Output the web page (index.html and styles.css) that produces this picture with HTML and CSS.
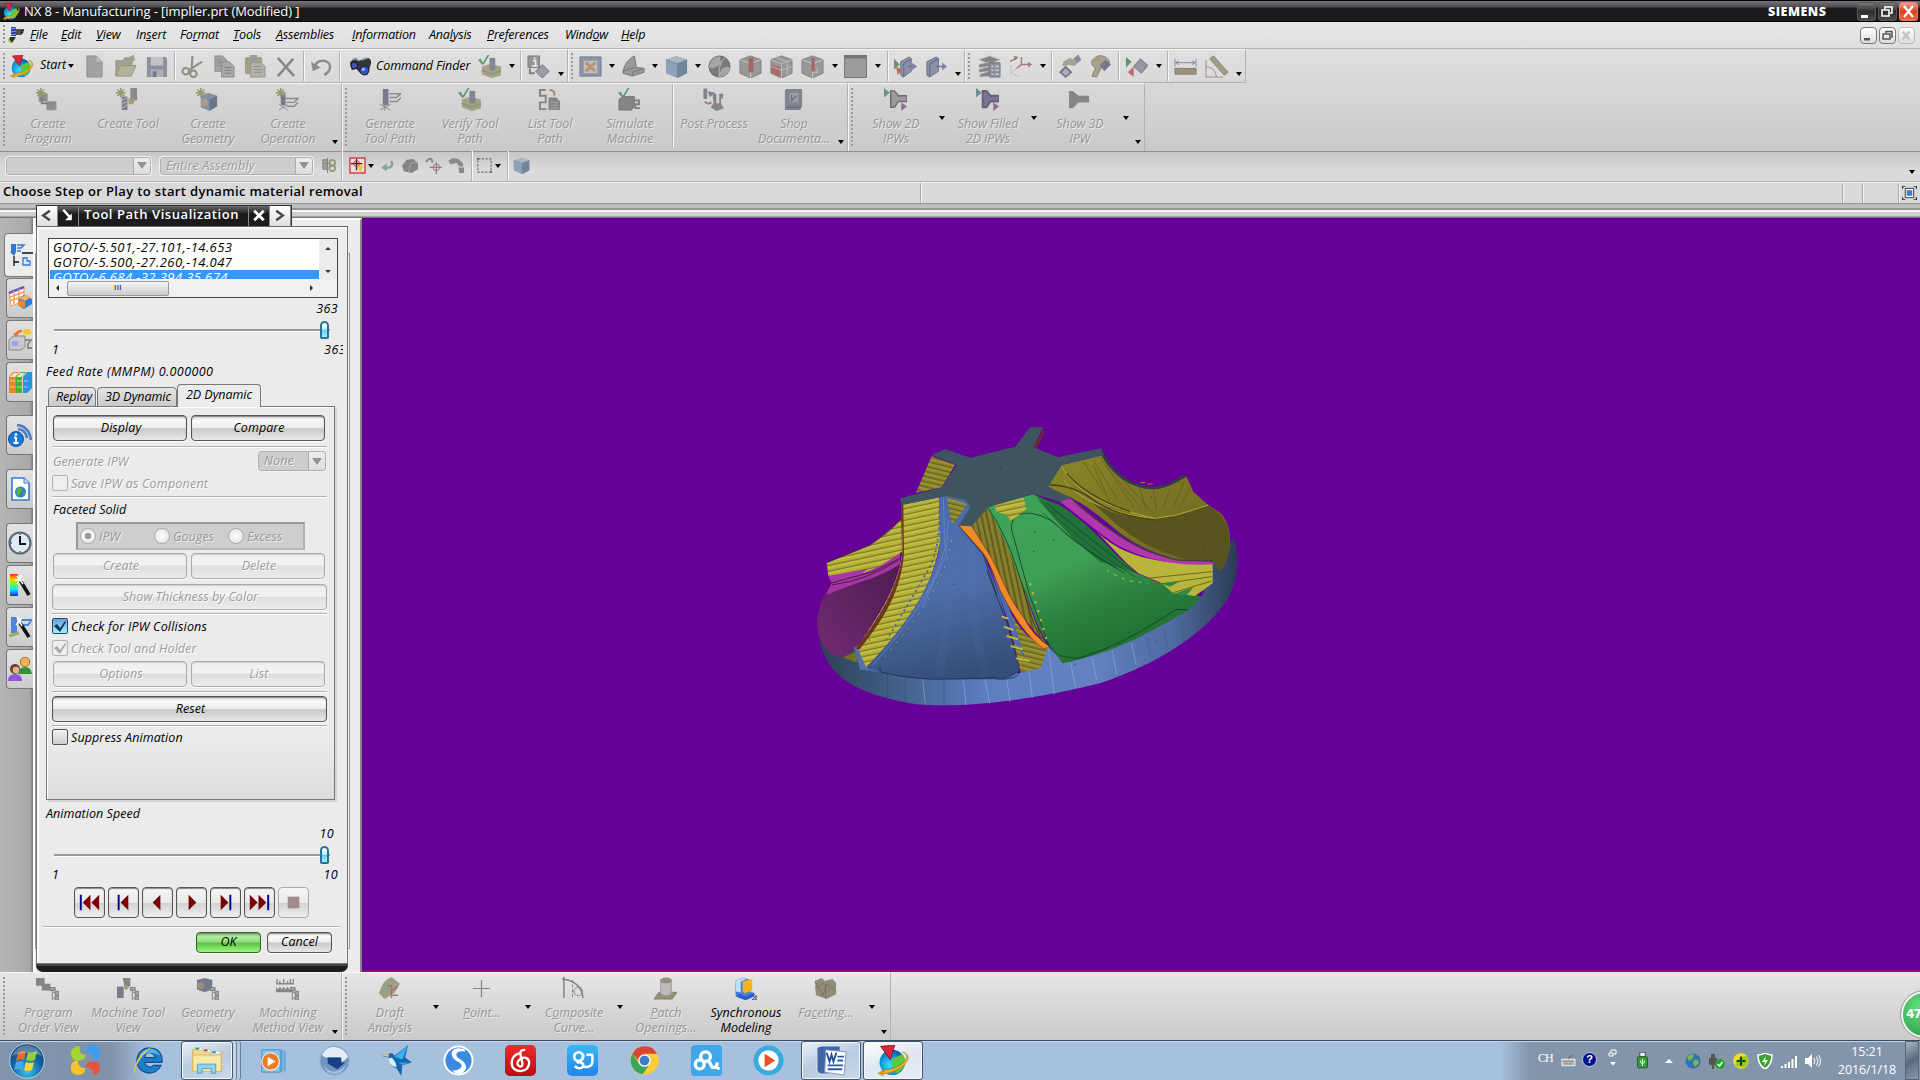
FILE: index.html
```html
<!DOCTYPE html>
<html lang="en">
<head>
<meta charset="utf-8">
<title>NX 8 - Manufacturing</title>
<link rel="stylesheet" href="styles.css">
</head>
<body>
<svg class="defs" width="0" height="0">
<defs>
<linearGradient id="gBlue" x1="0" y1="0" x2="0" y2="1"><stop offset="0" stop-color="#6fc8f5"/><stop offset="1" stop-color="#1273c8"/></linearGradient>
<radialGradient id="gOrb" cx=".5" cy=".8" r=".9"><stop offset="0" stop-color="#39c4ee"/><stop offset=".5" stop-color="#14619f"/><stop offset="1" stop-color="#0f3460"/></radialGradient>
<radialGradient id="gGlobe" cx=".4" cy=".6" r=".7"><stop offset="0" stop-color="#38e0ff"/><stop offset=".6" stop-color="#0c8ad0"/><stop offset="1" stop-color="#0a3f90"/></radialGradient>
<linearGradient id="gSky" x1="0" y1="0" x2="0" y2="1"><stop offset="0" stop-color="#38b8f4"/><stop offset="1" stop-color="#2484ea"/></linearGradient>
<linearGradient id="gRed" x1="0" y1="0" x2="0" y2="1"><stop offset="0" stop-color="#f02a2a"/><stop offset="1" stop-color="#b80f12"/></linearGradient>
<linearGradient id="gSpec" x1="0" y1="0" x2="0" y2="1"><stop offset="0" stop-color="#f22"/><stop offset=".25" stop-color="#fc0"/><stop offset=".45" stop-color="#6f3"/><stop offset=".7" stop-color="#0ef"/><stop offset="1" stop-color="#22f"/></linearGradient>
<symbol id="nx" viewBox="0 0 24 24"><circle cx="11" cy="13.500" r="9.800" fill="url(#gGlobe)"/><path d="M11 11l8-4q3 4 1.500 9-2 4-6 6-4-4-3.500-11" fill="#5cc83a"/><path d="M19 5.500c8 2 4 10-5 14-6 3-10 3-12 2.500l2-2 0 4-4-2 4-2.500q14-1 18-9 1-4-3-5" fill="#f4b020" stroke="#a96a10" stroke-width=".4"/><path d="M2 1l11-1-3.500 11.500z" fill="#d8283c" stroke="#7c0d1c" stroke-width=".6"/></symbol>
<symbol id="doc" viewBox="0 0 24 24"><path d="M4 1h10l6 6v16H4z" fill="#a2a2a2" stroke="#929292"/><path d="M14 1l6 6h-6z" fill="#bebebe"/></symbol>
<symbol id="open" viewBox="0 0 24 24"><path d="M2 22V6h7l2-3h8v7" fill="#a3a193" stroke="#928f80"/><path d="M2 22l5-11h16l-5 11z" fill="#b5b29c" stroke="#97947f"/><path d="M14 4l6-3 1 5" fill="none" stroke="#9ba790" stroke-width="2"/></symbol>
<symbol id="save" viewBox="0 0 24 24"><path d="M2 2h19l2 2v19H2z" fill="#8d90a0"/><path d="M6 2h13v9H6z" fill="#c3c3c6"/><path d="M6 15h13v8H6z" fill="#adadb3"/><path d="M8 17h4v6H8z" fill="#767a8c"/></symbol>
<symbol id="cut" viewBox="0 0 24 24"><g fill="none" stroke="#8f8f86" stroke-width="2.2"><path d="M12 1l-1 14M22 7L8 16"/><circle cx="5" cy="17" r="3.4"/><circle cx="13" cy="19.500" r="3.400"/></g></symbol>
<symbol id="copy" viewBox="0 0 24 24"><path d="M3 1h8l4 4v12H3z" fill="#a4a4a4" stroke="#8e8e8e"/><path d="M10 7h8l5 5v11H10z" fill="#a9a9a9" stroke="#8a8a8a"/><path d="M5 5h5M5 8h5M5 11h4M13 13h7M13 16h7M13 19h7" stroke="#828282"/></symbol>
<symbol id="paste" viewBox="0 0 24 24"><rect x="2" y="2" width="18" height="18" rx="2" fill="#a29f8b"/><rect x="7" y="0" width="8" height="5" rx="1" fill="#9b9b9b"/><path d="M8 8h11l4 4v11H8z" fill="#b3b3ab" stroke="#95958e"/><path d="M11 12h8M11 15h9M11 18h9" stroke="#8d8d86"/></symbol>
<symbol id="del" viewBox="0 0 24 24"><path d="M4 3l17 19M20 4L4 22" stroke="#868686" stroke-width="2.600"/></symbol>
<symbol id="undo" viewBox="0 0 24 24"><path d="M5 12C7 4 20 4 21 12c0 4-3 7-6 9" fill="none" stroke="#868a90" stroke-width="2.600"/><path d="M1 7l2 10 8-4z" fill="#868a90"/></symbol>
<symbol id="bino" viewBox="0 0 24 24"><path d="M1 8q5-7 9-2l10-3q5 2 2 9l-3 9-7-2-5-5-4 2z" fill="#33353b"/><circle cx="5.500" cy="11" r="3.600" fill="#4152ae" stroke="#111"/><circle cx="16" cy="16" r="4.800" fill="#3552c4" stroke="#15151a"/><circle cx="15" cy="15" r="1.800" fill="#8fb4ee"/><path d="M4 5q3-3 6 1M13 5l6-2" stroke="#98a0b0" stroke-width="2" fill="none"/></symbol>
<symbol id="verify" viewBox="0 0 24 24"><path d="M4 12l9-3 11 3v9l-10 3-10-4z" fill="#ab9f86"/><path d="M14 15l10-3v9l-10 3z" fill="#a5a285"/><path d="M4 16l10 4 10-4" stroke="#84a07e" stroke-width="2" fill="none"/><path d="M12 3h6v13h-6z" fill="#81859a"/><path d="M0 5l3-1 2 4 5-8h2L6 10H4z" fill="#5d9c6d"/></symbol>
<symbol id="info" viewBox="0 0 24 24"><path d="M1 1h12v12H1z" fill="#969696" stroke="#7e7e7e"/><path d="M6 6h3v6M5 11.500h6" stroke="#eee" stroke-width="1.600" fill="none"/><path d="M7 2.500h2v2H7z" fill="#eee"/><path d="M16 10l7 7-7 7-7-7z" fill="#9a9aaa" stroke="#74747e"/><path d="M3 14v5h5" stroke="#808080" stroke-width="2" fill="none"/></symbol>
<symbol id="fit" viewBox="0 0 24 24"><path d="M1 2h22v20H1z" fill="#8d96a6" stroke="#6f7c90"/><path d="M5 6h14v13H5z" fill="#c4beb6"/><path d="M7 8l10 9M17 8L7 17" stroke="#b79276" stroke-width="3"/></symbol>
<symbol id="wedge" viewBox="0 0 24 24"><path d="M1 17q3-12 12-16l2 12 8 1v4l-12 4-10-3z" fill="#999" stroke="#747474"/><path d="M13 13l-12 4M11 22v-4l12-4" stroke="#777" fill="none"/></symbol>
<symbol id="cube" viewBox="0 0 24 24"><path d="M1 5l11-4 11 4v14l-10 5L1 19z" fill="#8fa1b8"/><path d="M1 5l11-4 11 4-10 4z" fill="#a9b5c3"/><path d="M13 9l10-4v14l-10 5z" fill="#71859f"/><path d="M1 5l12 4v15M13 9l10-4" stroke="#6f8094" fill="none" stroke-width=".7"/></symbol>
<symbol id="ball" viewBox="0 0 24 24"><circle cx="12" cy="12" r="11" fill="#7b7b7b" stroke="#656565"/><path d="M12 1q-9 1-11 11 3 4 8 0 6-2 4-7zM15 14q-4 4-2 9 8-2 10-9-2-3-8 0z" fill="#a5a5a5"/><path d="M18 3q-8 6-6 20" stroke="#bbb" fill="none"/></symbol>
<symbol id="rcube" viewBox="0 0 24 24"><path d="M1 5l11-4 11 4v14l-11 5-11-5z" fill="#989898" stroke="#808080"/><path d="M1 5l11 4 11-4M12 9v15" stroke="#c2c2c2" fill="none"/><path d="M10 3h5v15h-5z" fill="#a46464"/></symbol>
<symbol id="rcube3" viewBox="0 0 24 24"><path d="M1 5l11-4 11 4v14l-11 5-11-5z" fill="#989898" stroke="#808080"/><path d="M1 5l11 4 11-4M12 9v15M12 18h5v-5" stroke="#c2c2c2" fill="none"/><path d="M11 3h3v14h-3z" fill="#a46464"/></symbol>
<symbol id="rcube2" viewBox="0 0 24 24"><path d="M1 5l11-4 11 4v14l-11 5-11-5z" fill="#989898" stroke="#808080"/><path d="M1 10l10 3v10L1 19z" fill="#a76d6d"/><path d="M1 5l11 4 11-4M12 9v15M1 12l11 4 11-4M7 3l11 4v14" stroke="#c6b8b8" fill="none"/></symbol>
<symbol id="sq" viewBox="0 0 24 24"><path d="M.5.500h23v23H.5z" fill="#9b9b9b" stroke="#737373"/><path d="M0 0h24v3.500H0z" fill="#757575"/></symbol>
<symbol id="plate" viewBox="0 0 24 24"><path d="M3 7l10-5 2 2v13L6 23l-3-2z" fill="#8d93a2" stroke="#6c7280"/><path d="M6 9l9-5M6 9v14M13 12h9" stroke="#6f6f9c" fill="none" stroke-width="1.500"/><path d="M19 8l5 4-5 4z" fill="#7f7fa6"/></symbol>
<symbol id="plate2" viewBox="0 0 24 24"><path d="M7 7l9-5 2 2v13L10 23l-3-2z" fill="#8d93a2" stroke="#6c7280"/><path d="M10 9l8-5M10 9v14M14 12h8" stroke="#6f6f9c" fill="none" stroke-width="1.500"/><path d="M19 8l5 4-5 4z" fill="#7f7fa6"/><path d="M0 4l6 6-6 5z" fill="#659372"/><path d="M2 12l6 3-4 6z" fill="#b56c5c"/></symbol>
<symbol id="layers" viewBox="0 0 24 24"><path d="M1 5l11-4 11 4-11 4zM1 10l11-3v5L1 13zM1 15l11-3v5L1 18zM2 20l10-3v5L2 23z" fill="#858588" stroke="#bcbcbc" stroke-width=".5"/><path d="M12 8h11v15H12z" fill="#8b8fa0" stroke="#757988"/><path d="M14 12h2M18 12h4M14 16h2M18 16h4M14 20h2M18 20h4" stroke="#ccc" stroke-width="1.500"/></symbol>
<symbol id="csys" viewBox="0 0 24 24"><path d="M13 2v8h10M13 10l-5 4M1 7l7-4" stroke="#a37c7c" fill="none" stroke-width="1.500"/><path d="M5 1l5 1-4 4zM20 7l4 3-4 3z" fill="#9f7676"/><path d="M2 11v8l9 4M2 19l8-7" stroke="#aaa" fill="none" stroke-dasharray="2 1"/></symbol>
<symbol id="hand" viewBox="0 0 24 24"><path d="M6 7l7-4 2 2 6-5 3 5-7 6-6-1-6 1z" fill="#a5a292" stroke="#8b8877" stroke-width=".5"/><path d="M17 3l4-3 3 5-4 3z" fill="#8488a4"/><path d="M8 11l7 7-7 6-7-6z" fill="#75758a"/><path d="M8 14l4 4-4 4-4-4z" fill="#aeaebc"/></symbol>
<symbol id="pal" viewBox="0 0 24 24"><path d="M3 6q6-8 14-4 6 4 4 8-3 4-8 3l-5 10-5-1 4-9q-5-1-4-7z" fill="#a7a28c" stroke="#88836e"/><path d="M17 5l6 5-7 7-5-6z" fill="#77778a"/></symbol>
<symbol id="mirror" viewBox="0 0 24 24"><path d="M1 2v11l6-6z" fill="#659372"/><path d="M3 18l6-6v11z" fill="#b56c6c"/><path d="M16 4l8 7-7 8-8-7z" fill="#9696a4" stroke="#72728a"/></symbol>
<symbol id="dist" viewBox="0 0 24 24"><path d="M1 14h22v6H1z" fill="#98947c" stroke="#858168"/><path d="M2 8h20M1 4v8M23 4v8M5 6L2 8l3 2M19 6l3 2-3 2" stroke="#7b86a0" fill="none"/></symbol>
<symbol id="angle" viewBox="0 0 24 24"><path d="M5 4l4-3 15 17-4 3z" fill="#a29e84" stroke="#85816c"/><path d="M1 5v18h18M1 12q10 1 11 11" stroke="#a08a8f" fill="none"/></symbol>
<symbol id="star" viewBox="0 0 24 24"><path d="M5 0v10M0 5h10M1.500 1.500l7 7M8.500 1.500l-7 7" stroke="#8f9a70" stroke-width="1.600"/></symbol>
<symbol id="prog" viewBox="0 0 24 24"><path d="M3 6h9v8H3zM11 14h10v9H11z" fill="#8c8c8c" stroke="#a6a6a6"/><path d="M6 9v7h6" stroke="#7c7c7c" fill="none" stroke-width="2"/><use href="#star"/></symbol>
<symbol id="tool" viewBox="0 0 24 24"><path d="M6 9h6v14H6z" fill="#7d7f8f"/><path d="M6 13l6-3M6 17l6-3M6 21l6-3" stroke="#bbb"/><path d="M15 0h7v13h-7z" fill="#8b8b8b"/><path d="M13 11h7l-2 6h-5z" fill="#a59c7a"/><use href="#star"/></symbol>
<symbol id="geom" viewBox="0 0 24 24"><path d="M5 8l8-3 9 3v11l-8 5-9-4z" fill="#8490a6"/><path d="M14 12l8-4v11l-8 5z" fill="#6b7589"/><circle cx="9" cy="15" r="4" fill="#a89c8a"/><use href="#star"/></symbol>
<symbol id="oper" viewBox="0 0 24 24"><path d="M5 6h5v12H5z" fill="#777a8b"/><path d="M3 17l9 6M12 17l-9 6" stroke="#8b8b8b"/><path d="M10 11h13l-4 4h-8M11 19h8l4-4" fill="none" stroke="#8a8a8a" stroke-width="1.500"/><use href="#star"/></symbol>
<symbol id="gen" viewBox="0 0 24 24"><path d="M5 1h6v17H5z" fill="#787b8d"/><path d="M2 17l11 6M13 17L2 23M7 16v8" stroke="#8b8b8b"/><path d="M12 6h12l-5 4h-7M12 14h8l4-4" fill="none" stroke="#8a8a8a" stroke-width="1.500"/></symbol>
<symbol id="list" viewBox="0 0 24 24"><path d="M8 2H2v6h6v7H2v7h7" fill="none" stroke="#858585" stroke-width="2"/><path d="M11 10h8l4 4v9H11z" fill="#858585"/><path d="M13 15h8M13 18h8M13 21h8" stroke="#aaa"/><path d="M12 2q6 0 5 6" stroke="#a98674" fill="none" stroke-width="2"/></symbol>
<symbol id="simu" viewBox="0 0 24 24"><path d="M1 12l4-3h12v10l-3 4H1z" fill="#858585" stroke="#727272"/><path d="M17 13h5v4h-4v4h5" stroke="#808080" fill="none" stroke-width="2"/><path d="M0 5l3-1 2 4 5-8h2L6 10H4z" fill="#5d9c6d"/></symbol>
<symbol id="post" viewBox="0 0 24 24"><path d="M2 1h3v10H2zM6 4l7 1-5 4" fill="#7b7e95" stroke="#888"/><path d="M3 14q2 4 7 1" stroke="#a97c68" stroke-width="2" fill="none"/><path d="M11 6h4v10h3V6h4v5h-2v6l3 4-8 3-6-4 3-4z" fill="#858585"/></symbol>
<symbol id="shop" viewBox="0 0 24 24"><path d="M4 1h17v18l-2 4H3V3z" fill="#81838f"/><path d="M8 5h9v10H8z" fill="#a0a1a8"/><path d="M10 7v6l5-5M5 20h13" stroke="#6e7078" fill="none" stroke-width="1.500"/></symbol>
<symbol id="show2" viewBox="0 0 24 24"><path d="M0 0l6 5-6 5z" fill="#6b8f95"/><path d="M7 3h4l4 5h9v6h-9l-4 6H7z" fill="#9b9b9b" stroke="#6d6d6d" stroke-width="1.500"/><path d="M18 15l6 4-6 5z" fill="#8c7090"/></symbol>
<symbol id="showf" viewBox="0 0 24 24"><path d="M0 0l6 5-6 5z" fill="#6b8f95"/><path d="M7 3h4l4 5h9v6h-9l-4 6H7z" fill="#77779a" stroke="#646470" stroke-width="2"/><path d="M18 15l6 4-6 5z" fill="#8c7090"/></symbol>
<symbol id="show3" viewBox="0 0 24 24"><path d="M1 3h4l6 5h11v7H11l-6 6H1z" fill="#858687"/></symbol>
<symbol id="cplus" viewBox="0 0 18 18"><path d="M3 3h5v10H3zM5 7h6M8 1v16" stroke="#808080" fill="#a0a0a0"/><circle cx="13" cy="6" r="3" fill="none" stroke="#9a977f" stroke-width="2"/><circle cx="13" cy="12" r="3" fill="none" stroke="#9a977f" stroke-width="2"/></symbol>
<symbol id="snap" viewBox="0 0 18 18"><path d="M1 1h16v16H1z" fill="#f2dcdc" stroke="#c8434f" stroke-width="1.500"/><path d="M2 7h12M8 2v12" stroke="#611" stroke-width="1.400"/><circle cx="8" cy="7" r="3" fill="none" stroke="#933"/><path d="M8 9h8l-3 3v4l-2 1v-5z" fill="#f3c01c"/></symbol>
<symbol id="ret" viewBox="0 0 18 18"><path d="M14 3q5 9-8 9" fill="none" stroke="#8aa3a3" stroke-width="3.500"/><path d="M0 12l8-6v11z" fill="#8aa3a3"/></symbol>
<symbol id="rock" viewBox="0 0 18 18"><path d="M0 9l5-6 7-1 5 5v6l-7 4-8-2z" fill="#858585"/><path d="M9 7l-2 9M9 7l7-2" stroke="#aaa"/></symbol>
<symbol id="tgt" viewBox="0 0 18 18"><path d="M1 5q6-7 7 1" fill="none" stroke="#808080" stroke-width="1.800"/><path d="M12 5v13M5 11h13" stroke="#957b7b" stroke-width="1.300"/><circle cx="12" cy="11" r="3.500" fill="none" stroke="#957b7b"/></symbol>
<symbol id="arc" viewBox="0 0 18 18"><path d="M0 4l5-3 6 1 5 5v3h-4l-3-4-6 2zM11 11h6v6h-5z" fill="#8a8a8a"/></symbol>
<symbol id="sel" viewBox="0 0 18 18"><path d="M2 2h14v14H2z" fill="none" stroke="#707070" stroke-dasharray="2.500 1.500" stroke-width="1.200"/><path d="M1 1h2v2H1zM15 15h2v2h-2z" fill="#a44"/></symbol>
<symbol id="tree" viewBox="0 0 24 24"><path d="M17 12v12M17 16h4M17 22h4" stroke="#888" fill="none"/><path d="M15 11h5v3h-5zM20 15h4v4h-4zM20 20h4v4h-4z" fill="#a6a6a6" stroke="#7c7c7c"/></symbol>
<symbol id="v1" viewBox="0 0 24 24"><path d="M0 1h9v6h6v7H6V9H0z" fill="#858585"/><use href="#tree"/></symbol>
<symbol id="v2" viewBox="0 0 24 24"><path d="M7 1h8v9H9z" fill="#858585"/><path d="M1 10h7v12H1z" fill="#797c88"/><path d="M8 9l6 2-4 3" fill="#a69c78"/><use href="#tree"/></symbol>
<symbol id="v3" viewBox="0 0 24 24"><path d="M1 3l8-2 8 2v10l-8 3-8-3z" fill="#747a8e"/><circle cx="5" cy="9" r="3.500" fill="#9c907c"/><use href="#tree"/></symbol>
<symbol id="v4" viewBox="0 0 24 24"><path d="M1 2v5h17V2M4 4v3M8 2v5M12 4v3M15 2v5" fill="none" stroke="#858585" stroke-width="1.400"/><path d="M0 16v-6l2 3 2-3 2 3 2-3 2 3 2-3 2 3 2-3 2 3v3z" fill="#858585"/><use href="#tree"/></symbol>
<symbol id="draft" viewBox="0 0 24 24"><path d="M1 17Q5 3 14 0l9 7-6 10-10 6z" fill="#9f9d86"/><path d="M4 13q4-10 10-12l2 3q-6 3-9 14z" fill="#90a488"/><path d="M10 9h4v13M14 14l7-4M15 19h6" stroke="#987878" fill="none" stroke-width="1.500"/></symbol>
<symbol id="pt" viewBox="0 0 24 24"><path d="M12 3v18M3 12h18" stroke="#858585" stroke-width="1.300"/></symbol>
<symbol id="comp" viewBox="0 0 24 24"><path d="M2 0v22M0 2q20 2 22 20" fill="none" stroke="#887c7e" stroke-width="1.500"/><path d="M11 3v20" stroke="#777" stroke-dasharray="3 2"/><circle cx="17" cy="15" r="4.500" fill="none" stroke="#888"/></symbol>
<symbol id="patch" viewBox="0 0 24 24"><path d="M5 16h19l-5 7H0z" fill="#979179" stroke="#857f68"/><path d="M7 3v15q6 3 11 0V3" fill="#bbb" stroke="#999"/><ellipse cx="12.500" cy="3.500" rx="6" ry="3" fill="#948e7a"/></symbol>
<symbol id="sync" viewBox="0 0 24 24"><path d="M2 4l8-3 6 2v12l5 2v3l-9 4-10-4z" fill="#4c83d9" stroke="#2658ae" stroke-width=".5"/><path d="M2 4l8-3 3 1-6 3v11l-5-1z" fill="#bde2fa"/><path d="M9 5l8-3 2 1v11l-8 3-2-2z" fill="#f5b321"/><path d="M4 17l8 3 9-3v3l-9 4-8-3z" fill="#2b5fcf"/><path d="M23 19v5h-4M23 20l-4 4" stroke="#335" fill="none"/></symbol>
<symbol id="facet" viewBox="0 0 24 24"><path d="M1 4l7-3 3 3 8-2 4 4v12l-10 5-11-4z" fill="#928b79"/><path d="M1 5l8 14 5-12 9 8M12 7v15M1 12l9-5" stroke="#736e62" fill="none" stroke-width=".8"/></symbol>
<pattern id="ridge" width="200" height="17" patternUnits="userSpaceOnUse" patternTransform="rotate(-12)"><path d="M0 0h200v17H0z" fill="#b6b23b"/><path d="M0 12h200v5H0z" fill="#9b9530"/><path d="M0 16h200" stroke="#676122" stroke-width="2"/><path d="M0 3h200" stroke="#c6c344" stroke-width="4"/></pattern>
<pattern id="ridgeD" width="200" height="15" patternUnits="userSpaceOnUse" patternTransform="rotate(14)"><path d="M0 0h200v15H0z" fill="#8c862c"/><path d="M0 13h200" stroke="#5a5520" stroke-width="3"/><path d="M0 3h200" stroke="#b3ae3c" stroke-width="2"/></pattern>
<pattern id="ridge2" width="16" height="80" patternUnits="userSpaceOnUse" patternTransform="rotate(-12)"><path d="M0 0h16v80H0z" fill="#817a28"/><path d="M2 0v80" stroke="#575120" stroke-width="4"/><path d="M10 0v80" stroke="#958d32" stroke-width="2"/></pattern>
<linearGradient id="rim"><stop offset="0" stop-color="#2d3e50"/><stop offset=".15" stop-color="#3e5a80"/><stop offset=".4" stop-color="#5c7dc0"/><stop offset=".65" stop-color="#6482c2"/><stop offset=".85" stop-color="#4f6aa0"/><stop offset="1" stop-color="#2a3b52"/></linearGradient>
<linearGradient id="bladeB" x1=".4" x2=".6" y1="0" y2="1"><stop offset="0" stop-color="#4a6bb0"/><stop offset=".5" stop-color="#4f6ea9"/><stop offset="1" stop-color="#354c77"/></linearGradient>
<linearGradient id="bladeG" x1=".2" x2=".7" y1="0" y2="1"><stop offset="0" stop-color="#3ca257"/><stop offset=".4" stop-color="#3f9f57"/><stop offset=".65" stop-color="#2b813e"/><stop offset="1" stop-color="#1c6a2f"/></linearGradient>
<linearGradient id="bladeM" x1="1" x2="0" y1="0" y2="1"><stop offset="0" stop-color="#4b1b4d"/><stop offset="1" stop-color="#742a74"/></linearGradient>
<linearGradient id="bladeY" x1="0" x2="1" y1="0" y2="1"><stop offset="0" stop-color="#8c8628"/><stop offset=".6" stop-color="#777124"/><stop offset="1" stop-color="#605b20"/></linearGradient>
</defs>
</svg>

<header class="titlebar">
  <svg class="i18"><use href="#nx"/></svg>
  <span class="apptitle">NX 8 - Manufacturing - [impller.prt (Modified) ]</span>
  <span class="brand">SIEMENS</span>
  <div class="winbtns">
    <i class="wb"><svg viewBox="0 0 19 19"><path d="M4 13h7v3H4z" fill="#fff"/></svg></i>
    <i class="wb"><svg viewBox="0 0 19 19"><path d="M4 8h7v6H4zM7 7V5h7v6h-2" fill="none" stroke="#fff" stroke-width="1.600"/></svg></i>
    <i class="wb close"><svg viewBox="0 0 19 19"><path d="M5 4l9 11M14 4L5 15" stroke="#fff" stroke-width="2.200"/></svg></i>
  </div>
</header>

<nav class="menubar">
  <i class="grip"></i>
  <svg class="mapp" viewBox="0 0 16 18"><path d="M3 1h5v9H3z" fill="#2b3c9c"/><path d="M3 3l5-1M3 6l5-1M3 9l5-1" stroke="#8aa0ea"/><path d="M8 4h8l-3 2H8M8 8h5l2-2" fill="none" stroke="#222" stroke-width="1.500"/><path d="M2 11h6l-4 6-3-3z" fill="#333"/><path d="M0 13l3 4" stroke="#b7c632" stroke-width="2"/></svg>
  <span class="m1"><u>F</u>ile</span><span class="m2"><u>E</u>dit</span><span class="m3"><u>V</u>iew</span><span class="m4">In<u>s</u>ert</span><span class="m5">Fo<u>r</u>mat</span><span class="m6"><u>T</u>ools</span><span class="m7"><u>A</u>ssemblies</span><span class="m8"><u>I</u>nformation</span><span class="m9">Ana<u>l</u>ysis</span><span class="m10"><u>P</u>references</span><span class="m11">Wind<u>o</u>w</span><span class="m12"><u>H</u>elp</span>
  <div class="mdi">
    <i><svg viewBox="0 0 17 17"><path d="M4 11h6v2.500H4z" fill="#555"/></svg></i>
    <i><svg viewBox="0 0 17 17"><path d="M4 7h7v5H4zM7 6V4.500h6V10h-1" fill="none" stroke="#555" stroke-width="1.500"/></svg></i>
    <i class="off"><svg viewBox="0 0 17 17"><path d="M4.500 4.500l7 8M11.500 4.500l-7 8" stroke="#c2c2c2" stroke-width="2.400"/></svg></i>
  </div>
</nav>

<section class="toolarea">
  <div class="trow row1">
    <div class="bar">
      <i class="grip"></i>
      <svg class="ic start"><use href="#nx"/></svg><span class="lab startlab">Start<b class="dd"></b></span>
      <i class="b"><svg class="ic"><use href="#doc"/></svg></i><i class="b"><svg class="ic"><use href="#open"/></svg></i><i class="b"><svg class="ic"><use href="#save"/></svg></i>
      <i class="sep"></i>
      <i class="b"><svg class="ic"><use href="#cut"/></svg></i><i class="b"><svg class="ic"><use href="#copy"/></svg></i><i class="b"><svg class="ic"><use href="#paste"/></svg></i><i class="b"><svg class="ic"><use href="#del"/></svg></i>
      <i class="sep"></i>
      <i class="b"><svg class="ic"><use href="#undo"/></svg></i>
      <i class="sep s7"></i>
      <span class="lab finder"><svg class="ic"><use href="#bino"/></svg>Command Finder</span>
      <i class="b"><svg class="ic"><use href="#verify"/></svg></i><i class="a"></i>
      <i class="sep"></i>
      <i class="b"><svg class="ic"><use href="#info"/></svg></i><i class="a low"></i>
    </div>
    <div class="bar">
      <i class="grip"></i>
      <i class="b w26"><svg class="ic"><use href="#fit"/></svg></i><i class="a w16"></i>
      <i class="b w29"><svg class="ic"><use href="#wedge"/></svg></i><i class="a"></i>
      <i class="b w30"><svg class="ic"><use href="#cube"/></svg></i><i class="a"></i>
      <i class="b"><svg class="ic"><use href="#ball"/></svg></i><i class="b"><svg class="ic"><use href="#rcube"/></svg></i><i class="b"><svg class="ic"><use href="#rcube2"/></svg></i><i class="b"><svg class="ic"><use href="#rcube3"/></svg></i><i class="a"></i>
      <i class="b w29"><svg class="ic"><use href="#sq"/></svg></i><i class="a w16"></i>
      <i class="sep"></i>
      <i class="b w30"><svg class="ic"><use href="#plate2"/></svg></i><i class="b"><svg class="ic"><use href="#plate"/></svg></i><i class="a low"></i>
    </div>
    <div class="bar last">
      <i class="grip"></i>
      <i class="b"><svg class="ic"><use href="#layers"/></svg></i><i class="b"><svg class="ic"><use href="#csys"/></svg></i><i class="a"></i>
      <i class="sep"></i>
      <i class="b"><svg class="ic"><use href="#hand"/></svg></i><i class="b"><svg class="ic"><use href="#pal"/></svg></i>
      <i class="sep"></i>
      <i class="b"><svg class="ic"><use href="#mirror"/></svg></i><i class="a"></i>
      <i class="sep"></i>
      <i class="b"><svg class="ic"><use href="#dist"/></svg></i><i class="b"><svg class="ic"><use href="#angle"/></svg></i><i class="a low"></i>
    </div>
  </div>
  <div class="trow row2">
    <div class="bar">
      <i class="grip"></i>
      <div class="big"><svg class="ic"><use href="#prog"/></svg>Create<br>Program</div>
      <div class="big"><svg class="ic"><use href="#tool"/></svg>Create Tool</div>
      <div class="big"><svg class="ic"><use href="#geom"/></svg>Create<br>Geometry</div>
      <div class="big"><svg class="ic"><use href="#oper"/></svg>Create<br>Operation</div>
      <i class="a low"></i>
    </div>
    <div class="bar">
      <i class="grip"></i>
      <div class="big"><svg class="ic"><use href="#gen"/></svg>Generate<br>Tool Path</div>
      <div class="big"><svg class="ic"><use href="#verify"/></svg>Verify Tool<br>Path</div>
      <div class="big"><svg class="ic"><use href="#list"/></svg>List Tool<br>Path</div>
      <div class="big"><svg class="ic"><use href="#simu"/></svg>Simulate<br>Machine</div>
      <i class="sep"></i>
      <div class="big"><svg class="ic"><use href="#post"/></svg>Post Process</div>
      <div class="big"><svg class="ic"><use href="#shop"/></svg>Shop<br>Documenta...</div>
      <i class="a low"></i>
    </div>
    <div class="bar last">
      <i class="grip"></i>
      <div class="big"><svg class="ic"><use href="#show2"/></svg>Show 2D<br>IPWs</div><i class="a"></i>
      <div class="big"><svg class="ic"><use href="#showf"/></svg>Show Filled<br>2D IPWs</div><i class="a"></i>
      <div class="big"><svg class="ic"><use href="#show3"/></svg>Show 3D<br>IPW</div><i class="a"></i>
      <i class="a low"></i>
    </div>
  </div>
</section>

<section class="selbar">
  <div class="combo c1"><span></span><b></b></div>
  <div class="combo c2"><span>Entire Assembly</span><b></b></div>
  <svg class="i18"><use href="#cplus"/></svg>
  <i class="sep"></i>
  <svg class="i18 snap"><use href="#snap"/></svg><i class="a"></i>
  <i class="s"><svg class="i15"><use href="#ret"/></svg></i><i class="s"><svg class="i18"><use href="#rock"/></svg></i><i class="s"><svg class="i18"><use href="#tgt"/></svg></i><i class="s"><svg class="i18"><use href="#arc"/></svg></i>
  <i class="sep"></i>
  <i class="s sx"><svg class="i18"><use href="#sel"/></svg></i><i class="a"></i>
  <i class="sep"></i>
  <i class="s sx"><svg class="i18"><use href="#cube"/></svg></i>
  <i class="a low end"></i>
</section>

<section class="cue">
  <span class="prompt">Choose Step or Play to start dynamic material removal</span>
  <span class="cell c921"></span><span class="cell c20"></span><span class="cell c36"></span>
  <span class="cell full"><svg viewBox="0 0 15 15"><path d="M0 3V0h3M12 0h3v3M15 12v3h-3M3 15H0v-3" fill="none" stroke="#333" stroke-width="1.500"/><path d="M3 2.500h9v10H3z" fill="#fff" stroke="#333"/><path d="M4.500 4.500h6v6h-6z" fill="#3d7fd9"/></svg></span>
</section>
<div class="groove"></div>

<main class="work">
  <aside class="rail">
    <i class="rt active"><svg viewBox="0 0 24 24"><path d="M2 1h5v8l-2 4-4-4h1z" fill="#3477d0"/><path d="M8 2h7l-3 3H8M8 8h4" stroke="#3477d0" stroke-width="1.500" fill="none"/><path d="M5 13v10M5 19h5M13 10h11" stroke="#111" fill="none" stroke-width="1.300"/><path d="M14 15h4v3h3v4h-7z" fill="#dceaff" stroke="#3477d0" stroke-width="1.300"/></svg></i>
    <i class="rt"><svg viewBox="0 0 24 24"><path d="M1 7L16 1v14L3 20z" fill="#fff" stroke="#f0a05a" stroke-width="1.200"/><path d="M1 7L16 1" stroke="#6a5ad0" stroke-width="2.500"/><path d="M2 11l14-5M2 15l14-5M6 5v13M11 3v13" stroke="#f0a05a" stroke-width="1.500"/><path d="M10 13l6-4 8 4v5l-8 5-6-4z" fill="#2a7be0"/><path d="M10 12l9-3 4 2-6 4z" fill="#f7b45a"/><path d="M10 13l7 3v6l-7-3z" fill="#f08a24"/></svg></i>
    <i class="rt"><svg viewBox="0 0 24 24"><path d="M1 12l4-4h12v11l-4 3H1z" fill="#c6c8cc" stroke="#85878b"/><path d="M4 13h6v5H4z" fill="#98a4ec"/><path d="M17 12h6l-3 4v4h4" stroke="#8b8b85" stroke-width="2" fill="none"/><path d="M8 7q1-4 6-4" stroke="#e8742c" stroke-width="2.500" fill="none"/><path d="M5 5l3 4 3-4z" fill="#e8742c"/><path d="M15 2q4-2 8 0v4q-5 2-8-1z" fill="#f9c22e"/></svg></i>
    <i class="rt"><svg viewBox="0 0 24 24"><path d="M1 7l4-5h6L8 7v16H1z" fill="#e8862a"/><path d="M8 7l5-5h5l-4 5v16H8z" fill="#49b02c"/><path d="M15 7l4-5h5v16l-5 5h-4z" fill="#2b93de"/><path d="M2 7l4-4h4L7 7zM9 7l4-4h4l-4 4z" fill="#f6ead0"/><path d="M2 11h5M9 11h5M16 11h4M2 17h5M9 17h5M16 17h4" stroke="#fff6" stroke-width="1.500"/></svg></i>
    <i class="rt g1"><svg viewBox="0 0 24 24"><path d="M9 2q12 1 14 15M10 6q8 1 9 9" fill="none" stroke="#4a7cc8" stroke-width="2.500"/><circle cx="8" cy="16" r="7.500" fill="#1c78d8" stroke="#0d4f9e"/><path d="M8 14v6M5.500 20h5M6 14.500h2" stroke="#fff" stroke-width="2"/><circle cx="8" cy="11.500" r="1.300" fill="#fff"/></svg></i>
    <i class="rt g2"><svg viewBox="0 0 24 24"><path d="M4 1h12l5 5v17H4z" fill="#fff" stroke="#3a7bd0" stroke-width="1.600"/><path d="M16 1v5h5" fill="#cde" stroke="#3a7bd0"/><circle cx="12.500" cy="15" r="5.500" fill="#2f7fc4"/><path d="M9 12q4-3 5 1l-3 6q-4-2-2-7M15 15l3 0-2 4z" fill="#5cb43c"/></svg></i>
    <i class="rt g3"><svg viewBox="0 0 24 24"><circle cx="12" cy="12" r="10.500" fill="#dfeaf4" stroke="#5c6a78" stroke-width="2.200"/><path d="M12 5v8h6" stroke="#112" stroke-width="2" fill="none"/><path d="M12 2.500v1.500M12 20v1.500M2.500 12H4" stroke="#123"/></svg></i>
    <i class="rt"><svg viewBox="0 0 24 24"><path d="M2 1h8v22H2z" fill="url(#gSpec)"/><path d="M12 7l9 15" stroke="#111" stroke-width="3.500"/><path d="M9 3l6 8M14 2l-5 9M7 7h9" stroke="#fff" stroke-width="1.600"/></svg></i>
    <i class="rt"><svg viewBox="0 0 24 24"><path d="M3 2h6v16H3z" fill="#4a86d6"/><path d="M13 5h11M11 10h9l3-4" stroke="#4a86d6" stroke-width="2" fill="none"/><path d="M1 21l10-3" stroke="#a3a866" stroke-width="3"/><path d="M12 8l9 14" stroke="#111" stroke-width="3.500"/><path d="M9 2l5 9M14 3l-6 7" stroke="#fff" stroke-width="1.600"/></svg></i>
    <i class="rt"><svg viewBox="0 0 24 24"><circle cx="17" cy="5" r="4.800" fill="#eeb45a" stroke="#a8702a"/><path d="M10 17q1-7 7-7t7 7z" fill="#2f9439"/><circle cx="7" cy="12" r="5" fill="#6a3f32"/><circle cx="8" cy="13" r="3.300" fill="#e7b48c"/><path d="M0 24q0-7 7-7t7 7z" fill="#9256d4"/></svg></i>
  </aside>
  <div class="behind"><div class="behindbox"></div></div>
  <div class="viewport">
    <svg class="impeller" viewBox="0 0 1350 930">
      <path d="M52 640C60 790 150 850 350 883 500 895 700 870 900 820 1080 760 1210 670 1275 580 1320 510 1318 430 1300 385L1240 455 1205 560 790 745 740 705 660 790 240 785 80 560z" fill="url(#rim)"/>
      <path d="M120 745v73M165 745v95M210 775v80M262 788v82M315 798v80M432 808v77" stroke="#30476a" stroke-width="1.500" fill="none"/>
      <path d="M368 808l8 75M490 808l8 78M555 808l14 74M620 806l10 70M687 785l10 78M745 715l18 138M812 758l14 74M877 745l13 65M937 722l12 70M995 700l14 65" stroke="#8db4d8" stroke-width="1.800" fill="none"/>
      <path d="M1040 678l14 66M1090 650l14 72M1140 622l14 74M1178 590l14 76M1215 555l12 76M1250 500l8 98" stroke="#3e5680" stroke-width="1.500"/>
      <path d="M420 250h145l20 60-60 60h-90z" fill="#4a6aa8"/>
      <path d="M78 545C60 580 46 620 54 665 66 710 90 738 130 742L168 715C230 620 290 540 302 430L95 520z" fill="url(#bladeM)"/>
      <path d="M95 520L300 425v38C230 510 150 520 82 555q0-15 13-35z" fill="#a834a4"/>
      <path d="M80 458L210 405Q260 370 304 328L306 425 245 465 215 490 85 498z" fill="url(#ridge)"/><path d="M85 498l120-22-20 15 60-25-10 18-140 38z" fill="#aa36a8"/>
      <path d="M80 458l130-53q52-33 94-77M90 520l130-35 80-40M95 525q110-15 200-75" stroke="#44203f" fill="none" stroke-width="3"/>
      <path d="M130 742l40-18v34z" fill="#777020"/>
      <path d="M162 712l12-5 30 68 40 12-64-8z" fill="#5270aa"/>
      <path d="M305 285L418 262 420 400C405 480 380 540 330 620 290 690 220 750 198 772L172 712C240 610 300 520 307 420z" fill="url(#ridge)"/>
      <path d="M305 285l3 130C304 510 250 610 168 715l10 4C258 620 303 540 312 430l-2-145z" fill="#693719"/>
      <path d="M418 260L440 262Q465 330 478 345L515 390 550 430 600 560 625 650 660 775Q650 800 610 808L400 808Q290 802 240 785L200 770C330 640 410 500 420 400z" fill="url(#bladeB)"/>
      <path d="M430 262l5 150C410 520 340 630 215 768M445 330l-8 110-70 150" fill="none" stroke="#7193de" stroke-width="3" opacity=".55"/>
      <path d="M418 300q0 120-28 170T260 690" stroke="#4565ae" stroke-width="5" stroke-dasharray="7 10" fill="none"/>
      <path d="M455 390C430 520 380 590 255 740" stroke="#a6a83d" stroke-width="3" stroke-dasharray="5 22" fill="none"/>
      <path d="M475 380Q440 600 420 800M520 400Q500 600 560 805" stroke="#6282bd" stroke-width="28" opacity=".08" fill="none"/>
      <path d="M240 770v15q60 17 160 23l150-3 30-3 8 5q70 4 72-25L625 650 560 480M475 345l75 90 40 120" fill="none" stroke="#1e2f4b" stroke-width="2.500"/>
      <path d="M440 262l60 20-25 40-20 20z" fill="url(#ridgeD)"/>
      <path d="M600 540C640 640 680 690 742 714L722 775 662 787 640 690z" fill="url(#ridgeD)"/>
      <path d="M570 470l60 130 45 145-30-45-25-80z" fill="#4c6cae"/>
      <path d="M605 620l20 6M612 650l28 10M620 678l34 10M632 708l36 10M648 745l40 8" stroke="#bdba42" stroke-width="6"/>
      <path d="M515 345L560 290C600 350 640 420 660 480 680 560 700 640 745 712 690 650 650 600 610 520 580 450 540 390 515 345z" fill="url(#ridge2)"/>
      <path d="M475 345L515 348 560 420C600 480 620 560 670 620Q700 680 752 712L730 716C680 680 640 620 600 540Q570 460 550 430z" fill="#f08a26" stroke="#713d12" stroke-width="2"/>
      <path d="M560 288L580 282 700 253 780 290C850 330 900 390 950 440L1010 490 1080 520 1205 560 1165 600C1080 650 950 730 787 760L745 700C700 640 690 560 650 480 620 400 590 340 560 288z" fill="url(#bladeG)"/>
      <path d="M710 258L780 285C850 330 900 385 950 435L1010 490 900 455C830 400 760 330 710 258z" fill="#22703a"/>
      <path d="M715 270C790 340 870 420 1030 515M740 280C820 340 900 420 1010 490M760 300l190 145M730 310q120 110 220 165" stroke="#184f28" fill="none" stroke-width="2"/>
      <path d="M560 288c70 100 95 200 125 300 20 70 30 90 60 115 15 35 50 40 90 42C980 700 1060 640 1130 598l35 2M745 700L690 560 635 360q-5-55 60-50 60 10 100 60 60 50 180 120" fill="none" stroke="#133f22" stroke-width="2.500"/>
      <path d="M583 285l88-22 8 35-50 38-5-22-35-8z" fill="url(#ridge)"/>
      <path d="M690 520l50 170" stroke="#b7b53c" stroke-width="7" stroke-dasharray="6 22"/>
      <path d="M785 165L910 135C940 180 980 230 1060 238 1100 235 1130 210 1160 200L1180 245 1225 285 1262 310C1300 350 1300 430 1260 485L1240 455 1130 450C1060 430 1000 400 960 370 900 320 850 270 735 232z" fill="url(#bladeY)"/>
      <path d="M870 270C950 330 1070 345 1225 285L1262 315C1300 360 1295 440 1258 484L1240 455C1100 450 1000 400 870 270z" fill="#58541f"/>
      <path d="M785 170q60 110 280 155l65-10 95-30M790 210q70 90 280 118" stroke="#b0a83c" stroke-width="3" fill="none"/>
      <path d="M750 225q70 0 130 45 70 50 190 60M800 190q60 70 190 115" stroke="#474318" stroke-width="4" fill="none"/>
      <path d="M850 155l60 90M880 150l70 115M900 140l100 150M880 165l50 115M920 170l100 120M960 200l100 110M1020 235l20 70M1060 240l10 60M1110 235l-20 60M1150 215l-30 80M1170 230l-30 60" stroke="#5d571d" stroke-width="2"/>
      <path d="M905 118C940 190 990 226 1060 230Q1110 225 1150 194l12 4q-60 40-105 40C990 236 930 190 903 132z" fill="#2f4048"/>
      <path d="M1020 218h16M1042 222h16" stroke="#e0632c" stroke-width="3"/>
      <path d="M890 365C960 430 1050 465 1238 460L1238 520 1185 558 1120 550 1085 520 1015 490 980 460z" fill="#b9b53c"/>
      <path d="M1040 505l195-20M1060 525l175-25M1120 548l115-35" stroke="#6c6820" stroke-width="3"/>
      <path d="M780 275L810 262C900 340 1000 430 1130 448L1240 455V463C1100 470 1020 440 950 405 890 365 840 320 780 275z" fill="#b236ad"/>
      <path d="M810 262q160 150 320 188l110 3" stroke="#44403a" stroke-width="4" fill="none"/>
      <path d="M920 480q30 20 65 32l60 8" stroke="#a9aa3a" stroke-width="4" stroke-dasharray="9 17" fill="none"/>
      <path d="M1000 500l50 8-10 12zM1080 520l60-6-30 16zM1120 552l60-20-20 24z" fill="#2f8a46"/>
      <path d="M395 138L465 165 425 232 348 248z" fill="url(#ridgeD)"/>
      <path d="M300 265L425 232 470 165 395 135 435 118 512 143 645 110 690 52H730L700 112 775 142 902 115 912 135 785 165 745 230 812 265 780 275 700 252 565 292 515 348 478 345 512 290 495 270 440 258 305 285z" fill="#3e5561"/>
      <path d="M732 58l-32 54 8 2 24-42z" fill="#6b2f24"/>
      <path d="M601 175h3M678 217h3M703 367h3M760 390h3M700 424h3M460 523h3M985 667h3M823 763h3M1052 262h3M1208 415h3M1068 694h3M207 690h3" stroke="#202a30" stroke-width="3"/>
    </svg>
  </div>

  <section class="dialog">
    <header class="dtabs">
      <i class="dlt"><svg viewBox="0 0 20 20"><path d="M13 5l-7 5 7 5" fill="none" stroke="#444" stroke-width="2.500"/></svg></i>
      <i class="ddk"><svg viewBox="0 0 20 20"><path d="M5 4l8 9" stroke="#fff" stroke-width="2.500"/><path d="M14 8v7H7z" fill="#fff"/></svg></i>
      <h2>Tool Path Visualization</h2>
      <i class="ddk"><svg viewBox="0 0 20 20"><path d="M5 5l10 10M15 5L5 15" stroke="#fff" stroke-width="3"/></svg></i>
      <i class="dlt"><svg viewBox="0 0 20 20"><path d="M6 5l7 5-7 5" fill="none" stroke="#444" stroke-width="2.500"/></svg></i>
    </header>
    <div class="dbody">
      <div class="listbox">
        <div class="lrows"><p>GOTO/-5.501,-27.101,-14.653</p><p>GOTO/-5.500,-27.260,-14.047</p><p class="on">GOTO/-6.684,-32.394,35.674</p></div>
        <div class="vsc"><b class="up"></b><b class="dn"></b></div>
        <div class="hsc"><b class="lf"></b><i>III</i><b class="rg"></b></div>
      </div>
      <p class="val">363</p>
      <div class="slider"><i></i></div>
      <p class="range"><span>1</span><span class="clip">363</span></p>
      <p class="feed">Feed Rate (MMPM) 0.000000</p>
      <div class="tabs"><span class="t1">Replay</span><span class="t2">3D Dynamic</span><span class="t3">2D Dynamic</span></div>
      <div class="panel">
        <div class="pair"><button>Display</button><button>Compare</button></div>
        <hr class="h1">
        <div class="gen"><span>Generate IPW</span><div class="combo c3"><span>None</span><b></b></div></div>
        <label class="ck dis k1"><i></i>Save IPW as Component</label>
        <hr class="h2">
        <p class="fs">Faceted Solid</p>
        <div class="radios"><label><i class="sel"></i>IPW</label><label><i></i>Gouges</label><label><i></i>Excess</label></div>
        <div class="pair p2"><button disabled>Create</button><button disabled>Delete</button></div>
        <button class="wide" disabled>Show Thickness by Color</button>
        <hr class="h3">
        <label class="ck k2"><i class="checked"><svg viewBox="0 0 16 16"><path d="M2 8l3-2 3 4 5-7 1 1-6 10z" fill="#16345e"/></svg></i>Check for IPW Collisions</label>
        <label class="ck dis k3"><i><svg viewBox="0 0 16 16"><path d="M2 8l3-2 3 4 5-7 1 1-6 10z" fill="#aaa"/></svg></i>Check Tool and Holder</label>
        <div class="pair p3"><button disabled>Options</button><button disabled>List</button></div>
        <hr class="h4">
        <button class="wide reset">Reset</button>
        <hr class="h5">
        <label class="ck k4"><i class="plain"></i>Suppress Animation</label>
      </div>
      <p class="anim">Animation Speed</p>
      <p class="val v2">10</p>
      <div class="slider"><i></i></div>
      <p class="range r2"><span>1</span><span>10</span></p>
      <div class="play">
        <i><svg viewBox="0 0 30 30"><path d="M5 7h2v16H5z" fill="#008"/><path d="M16 7v16l-8-8zM25 7v16l-8-8z" fill="#7b0000"/></svg></i>
        <i><svg viewBox="0 0 30 30"><path d="M9 7h2v16H9z" fill="#008"/><path d="M20 7v16l-8-8z" fill="#7b0000"/></svg></i>
        <i><svg viewBox="0 0 30 30"><path d="M18 7v16l-8-8z" fill="#7b0000"/></svg></i>
        <i><svg viewBox="0 0 30 30"><path d="M12 7v16l8-8z" fill="#7b0000"/></svg></i>
        <i><svg viewBox="0 0 30 30"><path d="M19 7h2v16h-2z" fill="#008"/><path d="M10 7v16l8-8z" fill="#7b0000"/></svg></i>
        <i><svg viewBox="0 0 30 30"><path d="M23 7h2v16h-2z" fill="#008"/><path d="M5 7v16l8-8zM14 7v16l8-8z" fill="#7b0000"/></svg></i>
        <i class="off"><svg viewBox="0 0 30 30"><path d="M9 9h12v12H9z" fill="#9f8c8c"/></svg></i>
      </div>
      <hr class="h6">
      <div class="okrow"><button class="ok">OK</button><button>Cancel</button></div>
    </div>
    <div class="dfoot"></div>
  </section>
</main>

<section class="bottomtools">
  <div class="bar">
    <i class="grip"></i>
    <div class="big dn1"><svg class="ic"><use href="#v1"/></svg>Program<br>Order View</div>
    <div class="big"><svg class="ic"><use href="#v2"/></svg>Machine Tool<br>View</div>
    <div class="big"><svg class="ic"><use href="#v3"/></svg>Geometry<br>View</div>
    <div class="big"><svg class="ic"><use href="#v4"/></svg>Machining<br>Method View</div>
    <i class="a low"></i>
  </div>
  <div class="bar last">
    <i class="grip"></i>
    <div class="big"><svg class="ic"><use href="#draft"/></svg>Draft<br>Analysis</div><i class="a"></i>
    <div class="big"><svg class="ic"><use href="#pt"/></svg><span><u>P</u>oint...</span></div><i class="a"></i>
    <div class="big"><svg class="ic"><use href="#comp"/></svg><span>C<u>o</u>mposite</span>Curve...</div><i class="a"></i>
    <div class="big"><svg class="ic"><use href="#patch"/></svg><span><u>P</u>atch</span>Openings...</div>
    <div class="big blk"><svg class="ic"><use href="#sync"/></svg>Synchronous<br>Modeling</div>
    <div class="big"><svg class="ic"><use href="#facet"/></svg><span>Fa<u>c</u>eting...</span></div><i class="a"></i>
    <i class="a low"></i>
  </div>
</section>
<div class="bubble">47</div>

<footer class="taskbar">
  <i class="tk orb"><svg viewBox="0 0 36 36"><circle cx="18" cy="18" r="17.300" fill="url(#gOrb)" stroke="#b9d5e4"/><path d="M9 10q4-3 8-1l-2 8q-4-2-8 1z" fill="#ee6b2d"/><path d="M19 9q4 2 9-1l-2 9q-4 2-9 0z" fill="#8fce3c"/><path d="M7 19q4-2 8 0l-2 8q-4-2-8 0z" fill="#49a5e8"/><path d="M17 19q4 2 8 0l-2 8q-4 2-8 0z" fill="#fdd13a"/><path d="M3 13Q8 2 18 2t15 11Q18 6 3 13" fill="#fff" opacity=".3"/></svg></i>
  <i class="tk"><svg viewBox="0 0 32 32"><path d="M10 1Q1 2 1 9q1 8 8 7 7 0 7-6-7 1-6-9" fill="#a6d52f"/><path d="M16 8q0-8 8-8 8 1 7 8 0 8-7 8 1-8-8-8" fill="#3e9df0"/><path d="M8 16q-8 1-7 8 0 7 8 7 6 0 7-7-8 0-8-8" fill="#fcc229"/><path d="M31 24q0-8-8-7-6 0-7 6 8 0 8 8 6 0 7-7" fill="#e75340"/></svg></i>
  <i class="tk ie"><svg viewBox="0 0 34 34"><path d="M18 4a13 13 0 1 0 12 18h-8q-3 3-6 1-3-2-3-4h18Q32 5 18 4m-5 10q1-5 5-5t6 5z" fill="#1d7fc8" stroke="#0f4f8c" stroke-width="1.200"/><path d="M7 13q4-9 14-8 6 2 8 7-8-6-22 1" fill="#6cc8f4" opacity=".7"/><path d="M32 2q-10-4-21 10T4 32q-5-4 2-16T24 2q5-2 8 0" fill="#f5c83c"/></svg></i>
  <i class="tbtn explorer"><svg viewBox="0 0 34 32"><path d="M1 4h10l3 3h18v21H1z" fill="#f3d987" stroke="#cfa94c"/><path d="M4 2h7v3H4zM12 4h8v3h-8zM21 6h10v3H21z" fill="#fff" stroke="#ccb"/><path d="M4 2h4v2H4z" fill="#2a2"/><path d="M13 4h4v2h-4z" fill="#c33"/><path d="M22 6h4v2h-4z" fill="#28c"/><path d="M1 10h31v18H1z" fill="#f9e9a9" stroke="#d8b860"/><path d="M6 30V20h20v10h-5v-5H11v5z" fill="#8fd2f2" stroke="#4b9cc8"/></svg></i>
  <i class="stack"></i><i class="stack s2"></i>
  <i class="tk"><svg viewBox="0 0 32 32"><path d="M5 5h19v23H5z" fill="#8cc6ea" stroke="#3f8fc4"/><path d="M25.500 5v23M28.500 6v21" stroke="#5aa6d8" stroke-width="2"/><circle cx="14" cy="17" r="9" fill="#f07c22" stroke="#fff"/><path d="M11 12v10l8-5z" fill="#fff"/></svg></i>
  <i class="tk"><svg viewBox="0 0 32 32"><circle cx="16" cy="16" r="15" fill="#6f95c4" stroke="#8fa9c8"/><path d="M3 10Q8 1 17 2t13 10q-5 6-8 5v-4H8q-3 0-5-3" fill="#e3ebf4"/><path d="M9 13h14v5l4 0-8 7-10-6z" fill="#173f86"/><path d="M4 20q10 14 24 1-4 9-12 9T4 20" fill="#9fbfe4"/></svg></i>
  <i class="tk"><svg viewBox="0 0 32 32"><path d="M0 11l7-1q4-4 7 1L28 0l-3 13 7 5-10 3-1 11-5-8Q8 22 8 13z" fill="#1668ae"/><path d="M14 12L28 0 22 15z" fill="#3fb0ea"/><path d="M18 18l13 0-9 3z" fill="#2f98dc"/><path d="M0 10.500l8-1v3z" fill="#f0c04c"/><path d="M8 14q0 8 8 9 0-5-5-10" fill="#d9efff"/></svg></i>
  <i class="tk"><svg viewBox="0 0 32 32"><circle cx="16" cy="16" r="15.500" fill="#fff"/><circle cx="16" cy="16" r="13.500" fill="#3a8ae0"/><path d="M22 4Q8 1 9 10q1 5 8 8 4 3 1 6-4 3-9 2 6 6 12 2 6-5 0-11l-6-4q-3-4 1-6 4-1 7 0z" fill="#fff"/></svg></i>
  <i class="tk"><svg viewBox="0 0 32 32"><rect width="32" height="32" rx="5" fill="url(#gRed)"/><path d="M20 5q-5 0-4 5l2 9q0 4-3 3-5-3 1-8 8-3 9 4 0 8-9 9-10-1-9-10 1-6 7-8" fill="none" stroke="#fff" stroke-width="2.400" stroke-linecap="round"/></svg></i>
  <i class="tk"><svg viewBox="0 0 32 32"><rect width="32" height="32" rx="5" fill="url(#gSky)"/><circle cx="12" cy="12" r="4.500" fill="none" stroke="#fff" stroke-width="2.800"/><path d="M17 10q0 5-6 8 6-1 6 4-4 4-9 0M20 10h6q1 8-1 11-4 3-8 1" fill="none" stroke="#fff" stroke-width="2.600" stroke-linejoin="round"/></svg></i>
  <i class="tk"><svg viewBox="0 0 32 32"><circle cx="16" cy="16" r="14.500" fill="#fbcf33"/><path d="M3.500 9A14.500 14.500 0 0 1 29 9H16v14z" fill="#dc4433"/><path d="M3.500 9A14.500 14.500 0 0 0 14 30.300L20 22 11 20z" fill="#3aa757"/><circle cx="16" cy="16" r="6.500" fill="#f4f4f4"/><circle cx="16" cy="16" r="5" fill="#3f7ecb"/></svg></i>
  <i class="tk"><svg viewBox="0 0 32 32"><rect width="32" height="32" rx="4" fill="#3fa6ea"/><circle cx="15" cy="12" r="5" fill="none" stroke="#fff" stroke-width="3.400"/><circle cx="9" cy="20" r="4.600" fill="none" stroke="#fff" stroke-width="3.400"/><path d="M18 16l4 7q5 1 5-5" fill="none" stroke="#fff" stroke-width="3.400"/><circle cx="28" cy="24" r="1.800" fill="#fff"/></svg></i>
  <i class="tk"><svg viewBox="0 0 32 32"><circle cx="16" cy="16" r="15.500" fill="#39a9de"/><circle cx="16" cy="16" r="10.500" fill="#fff"/><path d="M12 9v14l11-7z" fill="#e8502c"/></svg></i>
  <i class="tbtn word"><svg viewBox="0 0 32 32"><path d="M1 3q2-2 6-2h18v12L12 30H5q-4-1-4-4z" fill="#3e66a8" stroke="#d8e4f4"/><path d="M10 5l21 2-2 24-20-3z" fill="#fff" stroke="#8295b8"/><path d="M11 8l3 9 2-7 2 7 3-9" fill="none" stroke="#24509c" stroke-width="2"/><path d="M22 12h7M22 16h6M12 21h16M12 25h15" stroke="#2f5ba8" stroke-width="2"/></svg></i>
  <i class="tbtn nxb"><svg viewBox="0 0 24 24"><use href="#nx"/></svg></i>
  <div class="tray">
    <span class="ch">CH</span>
    <svg class="kb" viewBox="0 0 16 12"><path d="M1 4h14v7H1z" fill="#bbb" stroke="#eee"/><path d="M2 6.500h12M4 9h8" stroke="#555" stroke-dasharray="1 1"/><path d="M8 4q0-3 5-4" stroke="#666" fill="none"/></svg>
    <span class="help">?</span>
    <svg class="rs" viewBox="0 0 9 18"><path d="M1 4h4v3H1zM3 3V1h5v4H6" fill="none" stroke="#fff"/><path d="M2 13h6l-3 3.500z" fill="#fff"/></svg>
    <svg class="usb" viewBox="0 0 12 18"><path d="M3 0h6v5H3z" fill="#eee" stroke="#444"/><rect x=".5" y="5" width="11" height="12" rx="1.500" fill="#2f9f2f" stroke="#185c18"/><path d="M6 7v8M4 9v2l2 2 2-2V9" stroke="#fff" fill="none"/></svg>
    <svg class="tri" viewBox="0 0 8 5"><path d="M0 5l4-4 4 4z" fill="#fff"/></svg>
    <svg class="t17" viewBox="0 0 16 16"><circle cx="8" cy="8" r="7.500" fill="#2e72b8"/><path d="M2 4q4-4 7-2l-2 4-3 2zM9 7q5-1 5 3l-4 4-2-4z" fill="#86b545"/></svg>
    <svg class="t17" viewBox="0 0 16 16"><path d="M2 1h4v4H2zM0 5h8v6q-4 3-8 0zM3 11h2v5H3z" fill="#555"/><circle cx="11" cy="11" r="5" fill="#26a52c"/><path d="M8.500 11l2 2 3-4" stroke="#fff" fill="none" stroke-width="1.400"/></svg>
    <svg class="t17" viewBox="0 0 16 16"><circle cx="8" cy="8" r="7.800" fill="#f7dd20"/><path d="M2 12Q5 3 14 3q3 5 0 9-5 5-12 0" fill="#67b82c" opacity=".6"/><path d="M8 3.500v9M3.500 8h9" stroke="#174c1a" stroke-width="2.200"/></svg>
    <svg class="t17" viewBox="0 0 16 16"><path d="M8 0q4 2 7 2 0 10-7 14Q1 12 1 2q3 0 7-2" fill="#3f9c2e" stroke="#fff" stroke-width="1.500"/><path d="M9 3L5 9h3l-1 4 4-6H8z" fill="#fff"/></svg>
    <svg class="t17" viewBox="0 0 16 16"><path d="M0 13h2v2H0zM3.500 11h2v4h-2zM7 9h2v6H7zM10.500 6h2v9h-2zM14 3h2v12h-2z" fill="#fff"/></svg>
    <svg class="t17" viewBox="0 0 16 16"><path d="M0 5h3l4-4v14l-4-4H0z" fill="#fff"/><path d="M9 5q2 3 0 6M11.500 3.500q3 4.500 0 9M13.500 2q4 6 0 12" stroke="#fff" fill="none"/></svg>
    <div class="clock">15:21<br>2016/1/18</div>
    <i class="peek"></i>
  </div>
</footer>
</body>
</html>
```
FILE: styles.css
```css
* { box-sizing: border-box; }
html, body { margin: 0; width: 1920px; height: 1080px; overflow: hidden; }
body { position: relative; display: flex; flex-direction: column; background: #d8d8d8; font: italic 12.5px/15px "Open Sans", "Noto Sans", sans-serif; color: #000; }
p, h2 { margin: 0; }
svg { display: block; flex: none; }
.defs { position: absolute; }
.ic { width: 23px; height: 23px; }
.i18 { width: 17px; height: 17px; }
.i15 { width: 13px; height: 13px; }

.titlebar { height: 22px; flex: none; display: flex; align-items: center; padding: 0 2px 0 3px; border-top: 1px solid #000; border-bottom: 1px solid #000; background: linear-gradient(#77757a 0, #4e4c50 6px, #1b1b1b 7px, #1b1b1b 100%); color: #fff; font-style: normal; }
.apptitle { margin-left: 4px; font-size: 13px; letter-spacing: -.08px; white-space: nowrap; }
.brand { margin-left: auto; margin-right: 28px; font: 800 12.500px "Open Sans", sans-serif; width: 61px; letter-spacing: .5px; }
.winbtns { display: flex; gap: 2px; }
.wb { width: 19px; height: 19px; border-radius: 3px; border: 1px solid #555; background: linear-gradient(#777, #2e2e2e 50%, #4b4b4b); }
.wb svg { margin: -1px; }
.wb.close { background: linear-gradient(#f0a090, #d8421c 50%, #f0693c); border-color: #e77; }

.menubar { height: 27px; flex: none; display: flex; align-items: center; background: linear-gradient(#e8e8e8, #dfdfdf); border-bottom: 1px solid #b4b4b4; padding-right: 5px; letter-spacing: -.2px; }
.menubar span { white-space: nowrap; margin-top: -1px; }
.menubar .grip { width: 8px; height: 20px; }
.mapp { width: 16px; height: 18px; margin-right: 6px; }
.m1 { width: 31px; } .m2 { width: 35px; } .m3 { width: 40px; } .m4 { width: 44px; } .m5 { width: 53px; } .m6 { width: 43px; } .m7 { width: 76px; } .m8 { width: 77px; } .m9 { width: 58px; } .m10 { width: 78px; } .m11 { width: 56px; }
.mdi { margin-left: auto; display: flex; gap: 2px; }
.mdi i { width: 17px; height: 17px; border: 1px solid #777; border-radius: 4px; background: linear-gradient(#fff, #ddd); }
.mdi svg { margin: -1px; }
.mdi .off { border-color: #bbb; }

.toolarea { height: 103px; flex: none; background: linear-gradient(#e0e0e0, #c9c9c9); border-bottom: 1px solid #8e8e8e; }
.trow { display: flex; }
.bar { display: flex; align-items: center; border-right: 1px solid #b2b2b2; border-bottom: 1px solid #b2b2b2; border-top: 1px solid #f6f6f6; box-shadow: 1px 0 #f6f6f6; }
.bar.last { box-shadow: none; }
.row1 .bar { height: 34px; }
.row2 .bar, .bottomtools .bar { height: 68px; align-items: stretch; }
.row2 .bar { border-bottom: 0; }
.grip { width: 9px; align-self: center; height: 26px; flex: none; background: repeating-linear-gradient(#9a9a9a 0 2px, transparent 2px 4px) 3px 0 / 2px 100% no-repeat; }
.row2 .grip, .bottomtools .grip { height: 59px; width: 8px; }
.b { width: 31px; display: flex; justify-content: center; flex: none; }
.w26 { width: 27px; } .w29 { width: 29px; } .w30 { width: 30px; }
.a { width: 13px; height: 100%; display: flex; align-items: center; justify-content: center; flex: none; }
.a::after, .dd::after { content: ""; border: 3px solid transparent; border-top: 4px solid #000; border-bottom: 0; }
.a.w16 { width: 15px; }
.a.low { align-items: flex-end; padding-bottom: 6px; }
.sep { width: 5px; height: 30px; flex: none; background: linear-gradient(90deg, transparent 2px, #b2b2b2 2px 3px, #f8f8f8 3px 4px, transparent 4px); }
.s7 { width: 7px; }
.start { margin-left: 1px; width: 24px; }
.lab { display: flex; align-items: center; white-space: nowrap; letter-spacing: -.1px; }
.startlab { width: 45px; padding-left: 6px; padding-bottom: 3px; }
.dd { display: inline-flex; margin: 2px 0 0 2px; }
.finder { width: 130px; padding-left: 5px; gap: 4px; line-height: 18px; }
.big { width: 80px; text-align: center; padding-top: 4px; color: #969696; white-space: nowrap; letter-spacing: -.1px; flex: none; text-shadow: 1px 1px #eaeaea; }
.big .ic { margin: 0 auto 5px; position: relative; left: -1px; }
.row2 .sep { height: 64px; width: 4px; }
.row2 .a:not(.low), .bottomtools .a:not(.low) { width: 12px; }
.last .big span { display: block; }
.last .a:not(.low) + .a.low { margin-left: -1px; }
.row2 .bar .a.low { padding-bottom: 7px; }

.selbar { height: 30px; flex: none; display: flex; align-items: center; padding: 0 4px 2px 5px; background: linear-gradient(#c6c6c6, #dadada 60%); border-bottom: 1px solid #b0b0b0; }
.combo { height: 20px; display: flex; border: 2px solid #f1f1f1; outline: 1px solid #b0b0b0; outline-offset: -2px; border-radius: 4px; background: #cdcdcd; color: #9b9b9b; overflow: hidden; }
.combo span { flex: 1; padding-left: 5px; text-shadow: 1px 1px #f4f4f4; line-height: 16px; letter-spacing: .15px; }
.combo b { width: 17px; background: linear-gradient(#eee, #ddd); border-left: 1px solid #aaa; display: flex; align-items: center; justify-content: center; }
.combo b::after { content: ""; border: 5px solid transparent; border-top: 7px solid #939393; border-bottom: 0; }
.c1 { width: 147px; margin-right: 7px; } .c2 { width: 155px; margin-right: 6px; }
.selbar .sep { margin: 0 2px; }
.snap { margin-left: 3px; }
.selbar .a:not(.end) { width: 10px; }
.s { width: 23px; display: flex; justify-content: center; }
.sx { width: 18px; }
.s + .sep { margin: 0 1px; }
.selbar .end { margin-left: auto; padding: 0 0 5px; width: 8px; }

.cue { height: 22px; flex: none; display: flex; background: #d9d9d9; border-top: 1px solid #f5f5f5; border-bottom: 1px solid #959595; }
.prompt { width: 920px; padding-left: 3px; font-style: normal; font-weight: 600; font-size: 13px; line-height: 17px; letter-spacing: .35px; }
.cell { border-left: 1px solid #aaa; box-shadow: inset 1px 0 #f3f3f3; }
.c921 { width: 922px; } .c20 { width: 20px; } .c36 { width: 36px; }
.full { flex: 1; padding: 3px 0 0 3px; }
.full svg { width: 15px; height: 14px; }
.groove { height: 14px; flex: none; background: linear-gradient(#bcbcbc 0 4px, #939393 4px 6px, #f6f6f6 6px 8px, #cfcfcf 8px 12px, #777 13px); }

.work { height: 754px; flex: none; display: flex; position: relative; }
.rail { width: 33px; background: linear-gradient(90deg, #b5b5b5, #a9a9a9 90%, #777); padding-top: 15px; display: flex; flex-direction: column; align-items: flex-end; gap: 2px; }
.rt { width: 27px; height: 40px; flex: none; border: 1px solid #777; border-right: 0; border-radius: 4px 0 0 4px; background: linear-gradient(#e3e3e3, #cbcbcb); display: flex; align-items: center; padding-left: 1px; }
.rt svg { width: 24px; height: 24px; }
.rt.active { width: 29px; height: 44px; background: #ebebeb; margin-bottom: -1px; padding-left: 4px; }
.g1, .g2, .g3 { margin-top: 12px; }
.g1 { margin-top: 11px; }
.behind { width: 329px; background: #ebebeb; border-left: 2px solid #fff; border-right: 2px solid #888; border-top: 2px solid #fff; padding: 33px 10px 0 0; }
.behindbox { height: 696px; border: 1px solid #999; }
.viewport { flex: 1; background: #660099; border-bottom: 2px solid #8c1060; position: relative; }
.impeller { position: absolute; left: 438px; top: 192px; width: 450px; height: 310px; }

.dialog { position: absolute; left: 36px; top: -13px; width: 312px; height: 767px; letter-spacing: .05px; }
.dtabs { display: flex; height: 21px; width: 256px; border: 1px solid #333; border-bottom: 0; background: linear-gradient(#6b6b6b, #1b1b1b 40%); }
.dtabs i { width: 21px; flex: none; border-right: 1px solid #888; }
.dtabs svg { width: 20px; height: 19px; }
.dlt { background: linear-gradient(#fff, #ddd); }
.dtabs h2 { flex: 1; color: #fff; font: 600 13px/17px "Open Sans", sans-serif; padding-left: 5px; letter-spacing: .55px; white-space: nowrap; border-right: 1px solid #888; }
.dbody { height: 738px; background: #ebebeb; border: 1px solid #777; border-top-color: #666; box-shadow: inset 2px 2px #f8f8f8; padding: 11px 9px 0 9px; }
.dfoot { height: 8px; background: #1c1c1c; border-top: 2px solid #444; border-radius: 0 0 7px 7px; }
.listbox { margin-left: 2px; width: 290px; height: 60px; border: 1px solid #444; background: #fff; display: grid; grid-template: 40px 1fr / 1fr 18px; }
.lrows { overflow: hidden; font-size: 13px; padding-left: 1px; letter-spacing: .45px; }
.lrows p { height: 15px; line-height: 17px; padding-left: 3px; }
.lrows .on { background: #3399ff; color: #fff; margin-top: 1px; line-height: 14px; }
.vsc { background: #ececec; display: flex; flex-direction: column; justify-content: space-between; align-items: center; padding: 8px 0 6px; }
.vsc b, .hsc b { border: 3.500px solid transparent; width: 0; height: 0; }
.up { border-bottom-color: #333 !important; border-top: 0 !important; } .dn { border-top-color: #333 !important; border-bottom: 0 !important; }
.lf { border-right-color: #222 !important; border-left: 0 !important; } .rg { border-left-color: #222 !important; border-right: 0 !important; }
.hsc { grid-column: 1 / 3; background: #f0f0f0; display: flex; align-items: center; padding: 0 24px 0 7px; }
.hsc i { width: 102px; height: 15px; border: 1px solid #999; border-radius: 2px; background: linear-gradient(#f5f5f5, #cbcbcb); margin: 0 auto 0 8px; text-align: center; font: 8px/12px "Liberation Sans"; letter-spacing: .5px; }
.val { margin-top: 3px; height: 16px; text-align: right; padding-right: 0; letter-spacing: .4px; }
.slider { height: 26px; position: relative; margin: 0 0 0 8px; width: 276px; background: linear-gradient(transparent 12px, #999 12px 14px, #fff 14px 15px, transparent 15px); }
.slider i { position: absolute; right: 1px; top: 4px; width: 9px; height: 18px; border: 2px solid #2a7393; border-radius: 5px 5px 2px 2px; background: linear-gradient(#fff, #c5efff 45%, #5ccfff 50%, #a6f0ff); }
.range { display: flex; justify-content: space-between; padding: 0 0 0 6px; height: 16px; margin-top: -1px; letter-spacing: .4px; }
.range .clip { width: 19px; overflow: hidden; margin-right: -5px; letter-spacing: .5px; }
.feed { margin-top: 6px; height: 21px; letter-spacing: .42px; }
.tabs { display: flex; align-items: flex-end; height: 22px; padding-left: 2px; position: relative; z-index: 1; margin-bottom: -1px; letter-spacing: -.05px; }
.tabs span { height: 20px; border: 1px solid #777; border-radius: 4px 4px 0 0; background: linear-gradient(#e4e4e4, #c9c9c9); line-height: 17px; padding-left: 7px; white-space: nowrap; }
.tabs .t1 { width: 48px; margin-right: 1px; } .tabs .t2 { width: 80px; } .tabs .t3 { width: 84px; height: 23px; background: #ebebeb; border-bottom: 0; padding-left: 8px; line-height: 20px; }
.panel { width: 289px; height: 394px; border: 1px solid #777; background: linear-gradient(#ebebeb 85%, #dcdcdc); box-shadow: 2px 2px #d3d3d3, inset 1px 1px #fff; padding: 8px 7px 0 5px; display: flex; flex-direction: column; align-items: stretch; }
button { font: inherit; letter-spacing: inherit; color: #000; height: 26px; padding: 0 0 2px; border: 1px solid #555; border-radius: 4px; background: linear-gradient(#d8d8d8, #fafafa 18%, #ececec 48%, #c9c9c9 53%, #e8e8e8); box-shadow: inset 0 1px 1px #888, 0 1px #fff; flex: none; }
button:disabled { color: #9c9c9c; border-color: #aaa; box-shadow: inset 0 1px 1px #ccc, 0 1px #fff; background: linear-gradient(#eee, #f3f3f3 45%, #dedede 52%, #ececec); text-shadow: 1px 1px #fff; }
.pair { display: grid; grid-template-columns: 134px 134px; gap: 4px; margin-left: 1px; flex: none; }
.pair button, .wide { padding-left: 2px; }
hr { margin: 0; border: 0; height: 2px; background: #b3b3b3; border-bottom: 1px solid #fff; width: 275px; flex: none; }
.h1 { margin-top: 5px; }
.gen { display: flex; justify-content: space-between; align-items: center; color: #9c9c9c; margin-top: 2px; height: 22px; flex: none; width: 275px; text-shadow: 1px 1px #fff; padding-left: 1px; }
.c3 { width: 70px; height: 22px; } .c3 span { line-height: 18px; }
.ck { display: flex; align-items: center; height: 16px; gap: 3px; flex: none; white-space: nowrap; letter-spacing: .2px; }
.ck i { width: 16px; height: 16px; border: 1px solid #555; border-radius: 2px; background: linear-gradient(#f3f3f3, #ccc); }
.ck svg { margin: -1px; width: 16px; height: 16px; }
.ck .checked { background: linear-gradient(#6aa2d8, #9ff0ff); border-color: #1d4570; }
.ck.dis { color: #9c9c9c; text-shadow: 1px 1px #fff; } .ck.dis i { border-color: #b2b2b2; background: #eee; }
.k1 { margin-top: 3px; } .h2 { margin-top: 5px; }
.fs { margin: 4px 0 0 1px; height: 20px; flex: none; }
.radios { margin: 0 0 0 24px; width: 229px; height: 28px; flex: none; border: 2px solid #999; border-right-color: #b0b0b0; border-bottom-color: #b8b8b8; background: #cecece; display: grid; grid-template-columns: 74px 74px 1fr; align-items: center; padding-left: 2px; color: #999; text-shadow: 1px 1px #eee; }
.radios label { display: flex; align-items: center; gap: 3px; }
.radios i { width: 16px; height: 16px; border-radius: 50%; border: 1px solid #aaa; background: radial-gradient(#fff, #ddd); }
.radios .sel { background: radial-gradient(#999 0 3px, #eee 3.500px); }
.p2 { margin-top: 3px; }
.wide { width: 275px; margin-top: 5px; }
.h3 { margin-top: 3px; } .k2 { margin-top: 3px; } .ck.k3 { margin-top: 6px; letter-spacing: .05px; } .p3 { margin-top: 5px; } .h4 { margin-top: 4px; }
.reset { margin-top: 3px; } .h5 { margin-top: 3px; } .ck.k4 { margin-top: 2px; letter-spacing: .1px; }
.anim { margin-top: 6px; height: 17px; }
.v2 { padding-right: 4px; }
.r2 { height: 20px; }
.play { display: flex; gap: 3px; padding-left: 28px; }
.play i { width: 31px; height: 31px; border: 1px solid #555; border-radius: 4px; background: linear-gradient(#f6f6f6, #e9e9e9 50%, #d2d2d2 52%, #eee); box-shadow: inset 0 1px 1px #888; }
.play svg { width: 29px; height: 29px; }
.play .off { border-color: #aaa; box-shadow: none; }
.h6 { margin: 8px 0 0 -3px; width: 297px; }
.okrow { display: flex; justify-content: flex-end; gap: 6px; padding-right: 6px; margin-top: 4px; }
.okrow button { width: 65px; height: 21px; }
.okrow .ok { background: linear-gradient(#6fbf5c, #b4eea4 20%, #8fdc78 48%, #5cc242 53%, #9df57f); border-color: #2e6b20; }

.bottomtools { height: 68px; flex: none; display: flex; background: linear-gradient(#e6e6e6, #cacaca); }
.bottomtools .big { letter-spacing: 0; }
.bottomtools .bar { border-bottom: 0; }
.bottomtools .dn1 { padding-left: 1px; }
.bottomtools .big.blk { color: #000; text-shadow: none; }

.bubble { position: absolute; left: 1901px; top: 991px; width: 47px; height: 47px; border-radius: 50%; background: radial-gradient(circle at 40% 30%, #68dc80, #3cb45c 60%, #278e45); border: 2px solid #f5f5f5; outline: 1px solid #999; color: #fff; font: 700 12px/43px "DejaVu Sans", sans-serif; padding-left: 3px; letter-spacing: -.8px; }

.taskbar { height: 40px; flex: none; display: flex; align-items: center; border-top: 1px solid #3b4a60; box-shadow: inset 0 1px #c8d7e6; background: linear-gradient(90deg, #8094ad 0, #7f92aa 110px, #a6c0dd 150px, #a6c0dd 1500px, #8395ab 1530px); }
.tk { width: 62px; display: flex; justify-content: center; flex: none; }
.tk svg, .tbtn svg { width: 31px; height: 31px; }
.orb { width: 54px; } .orb svg { width: 36px; height: 36px; }
.ie { width: 65px; } .ie svg { width: 33px; height: 33px; }
.tbtn { height: 39px; border: 1px solid #44566c; border-radius: 3px; background: linear-gradient(160deg, #e9f0f7, #b9cbdf 50%, #c9d9ea); box-shadow: inset 0 0 0 1px #f3f8fc; display: flex; align-items: center; justify-content: center; flex: none; width: 60px; }
.explorer { width: 52px; }
.stack { width: 4px; height: 39px; border-right: 1px solid #6b7f98; background: #c5d6e7; border-radius: 0 3px 3px 0; } .s2 { background: #b6cbe1; }
.word { margin-left: 2px; margin-right: 2px; }
.nxb { background: linear-gradient(160deg, #fff, #dde7f1 50%, #e6eef6); }
.tray { margin-left: auto; display: flex; align-items: center; height: 39px; color: #fff; font-style: normal; }
.ch { font: 12px "Liberation Serif", serif; width: 23px; margin-top: -5px; letter-spacing: -1px; }
.kb { width: 15px; height: 12px; margin-right: 6px; }
.help { width: 15px; height: 15px; border-radius: 50%; background: #00118c; border: 1px solid #c3cbe6; font: 700 11px/13px "Liberation Sans", sans-serif; text-align: center; margin-top: -3px; margin-right: 11px; }
.rs { width: 9px; height: 18px; margin: -6px 20px 0 0; }
.usb { width: 11px; height: 17px; margin-right: 17px; }
.tri { width: 8px; height: 5px; margin-right: 12px; }
.t17 { width: 16px; height: 16px; margin-right: 8px; }
.clock { width: 74px; text-align: center; font: 12.500px/18px "Open Sans", sans-serif; margin-left: 1px; letter-spacing: -.1px; }
.peek { width: 14px; height: 39px; border: 1px solid #56657a; margin: 0 1px 0 1px; background: linear-gradient(150deg, #a9b5c4, #596a80 50%, #8a99ac); }
```
